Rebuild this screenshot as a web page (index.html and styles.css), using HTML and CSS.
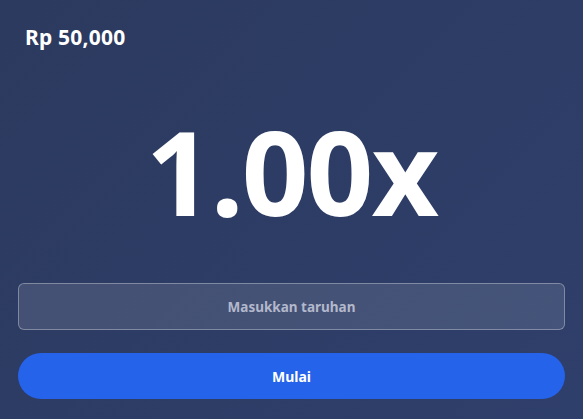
FILE: index.html
```html
<!DOCTYPE html>
<html lang="id">
<head>
<meta charset="utf-8">
<link rel="stylesheet" href="styles.css">
</head>
<body>
<main class="game">
  <div class="balance">Rp 50,000</div>
  <div class="multiplier">1.00x</div>
  <div class="controls">
    <input class="bet-input" type="text" placeholder="Masukkan taruhan">
    <button class="start-btn">Mulai</button>
  </div>
</main>
</body>
</html>
```
FILE: styles.css
```css
* { box-sizing: border-box; }
html, body { margin: 0; height: 100%; }
body {
  font-family: "Noto Sans", "Open Sans", sans-serif;
  background: linear-gradient(135deg, #2c3a5f 0%, #2f3f6b 100%);
  color: #fff;
}
.game {
  height: 419px;
  display: flex;
  flex-direction: column;
  padding: 22px 18px 0 18px;
}
.balance {
  font-weight: 700;
  font-size: 21px;
  line-height: 30px;
  padding-left: 7px;
  letter-spacing: 0.2px;
}
.multiplier {
  font-weight: 700;
  font-size: 117px;
  line-height: 1;
  text-align: center;
  letter-spacing: -2px;
  margin-top: 60px;
}
.controls {
  margin-top: 54px;
  display: flex;
  flex-direction: column;
  gap: 23px;
}
.bet-input {
  height: 47px;
  width: 100%;
  border-radius: 6px;
  border: 1px solid rgba(255,255,255,0.32);
  background: rgba(255,255,255,0.11);
  color: #fff;
  font-family: inherit;
  font-weight: 700;
  font-size: 13.5px;
  text-align: center;
  outline: none;
}
.bet-input::placeholder { color: #b3b8cb; }
.start-btn {
  height: 46px;
  width: 100%;
  border: none;
  border-radius: 23px;
  background: #2563eb;
  color: #fff;
  font-family: inherit;
  font-weight: 700;
  font-size: 14px;
}
```
